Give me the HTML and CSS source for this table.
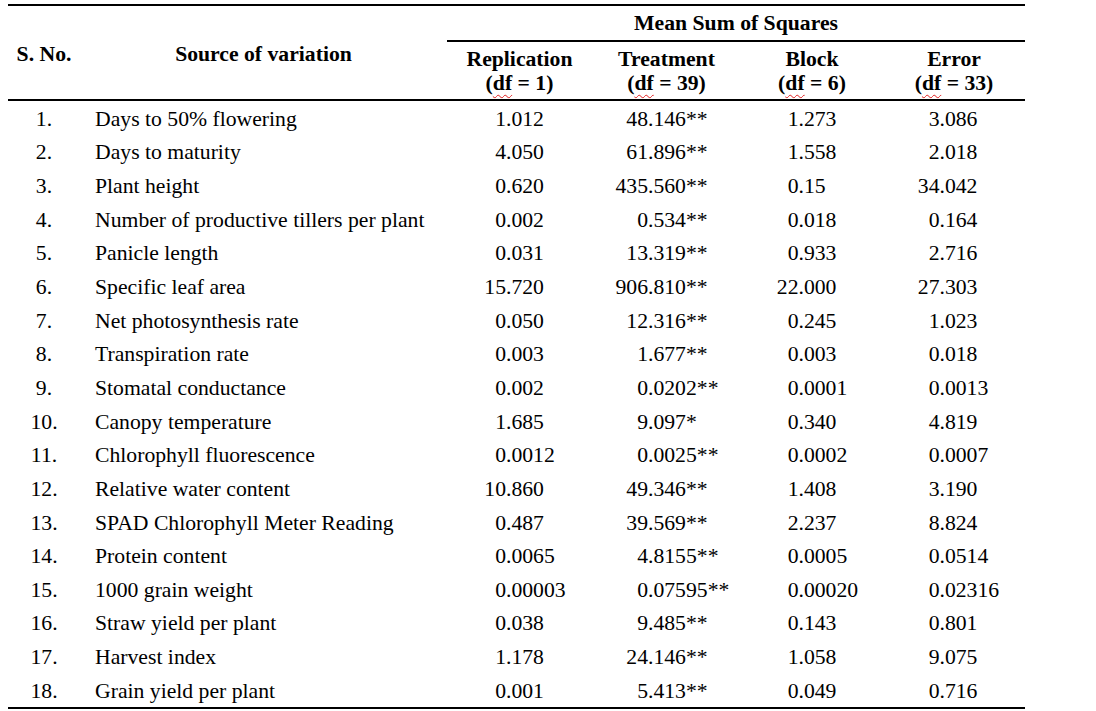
FILE: index.html
```html
<!DOCTYPE html>
<html>
<head>
<meta charset="utf-8">
<link rel="stylesheet" href="styles.css">
</head>
<body>
<table class="anova">
<colgroup>
<col class="c-sno"><col class="c-src"><col class="c-rep"><col class="c-trt"><col class="c-blk"><col class="c-err">
</colgroup>
<thead>
<tr class="h1">
<th rowspan="2" class="sno-h">S. No.</th>
<th rowspan="2" class="src-h">Source of variation</th>
<th colspan="4" class="mss">Mean Sum of Squares</th>
</tr>
<tr class="h2">
<th>Replication<br>(<span class="sq">df</span> = 1)</th>
<th>Treatment<br>(<span class="sq">df</span> = 39)</th>
<th>Block<br>(<span class="sq">df</span> = 6)</th>
<th>Error<br>(<span class="sq">df</span> = 33)</th>
</tr>
</thead>
<tbody>
<tr><td class="sno">1.</td><td class="src">Days to 50% flowering</td><td class="num rep"><span class="i">1</span>.012</td><td class="num trt"><span class="i">48</span>.146**</td><td class="num blk"><span class="i">1</span>.273</td><td class="num err"><span class="i">3</span>.086</td></tr>
<tr><td class="sno">2.</td><td class="src">Days to maturity</td><td class="num rep"><span class="i">4</span>.050</td><td class="num trt"><span class="i">61</span>.896**</td><td class="num blk"><span class="i">1</span>.558</td><td class="num err"><span class="i">2</span>.018</td></tr>
<tr><td class="sno">3.</td><td class="src">Plant height</td><td class="num rep"><span class="i">0</span>.620</td><td class="num trt"><span class="i">435</span>.560**</td><td class="num blk"><span class="i">0</span>.15</td><td class="num err"><span class="i">34</span>.042</td></tr>
<tr><td class="sno">4.</td><td class="src">Number of productive tillers per plant</td><td class="num rep"><span class="i">0</span>.002</td><td class="num trt"><span class="i">0</span>.534**</td><td class="num blk"><span class="i">0</span>.018</td><td class="num err"><span class="i">0</span>.164</td></tr>
<tr><td class="sno">5.</td><td class="src">Panicle length</td><td class="num rep"><span class="i">0</span>.031</td><td class="num trt"><span class="i">13</span>.319**</td><td class="num blk"><span class="i">0</span>.933</td><td class="num err"><span class="i">2</span>.716</td></tr>
<tr><td class="sno">6.</td><td class="src">Specific leaf area</td><td class="num rep"><span class="i">15</span>.720</td><td class="num trt"><span class="i">906</span>.810**</td><td class="num blk"><span class="i">22</span>.000</td><td class="num err"><span class="i">27</span>.303</td></tr>
<tr><td class="sno">7.</td><td class="src">Net photosynthesis rate</td><td class="num rep"><span class="i">0</span>.050</td><td class="num trt"><span class="i">12</span>.316**</td><td class="num blk"><span class="i">0</span>.245</td><td class="num err"><span class="i">1</span>.023</td></tr>
<tr><td class="sno">8.</td><td class="src">Transpiration rate</td><td class="num rep"><span class="i">0</span>.003</td><td class="num trt"><span class="i">1</span>.677**</td><td class="num blk"><span class="i">0</span>.003</td><td class="num err"><span class="i">0</span>.018</td></tr>
<tr><td class="sno">9.</td><td class="src">Stomatal conductance</td><td class="num rep"><span class="i">0</span>.002</td><td class="num trt"><span class="i">0</span>.0202**</td><td class="num blk"><span class="i">0</span>.0001</td><td class="num err"><span class="i">0</span>.0013</td></tr>
<tr><td class="sno">10.</td><td class="src">Canopy temperature</td><td class="num rep"><span class="i">1</span>.685</td><td class="num trt"><span class="i">9</span>.097*</td><td class="num blk"><span class="i">0</span>.340</td><td class="num err"><span class="i">4</span>.819</td></tr>
<tr><td class="sno">11.</td><td class="src">Chlorophyll fluorescence</td><td class="num rep"><span class="i">0</span>.0012</td><td class="num trt"><span class="i">0</span>.0025**</td><td class="num blk"><span class="i">0</span>.0002</td><td class="num err"><span class="i">0</span>.0007</td></tr>
<tr><td class="sno">12.</td><td class="src">Relative water content</td><td class="num rep"><span class="i">10</span>.860</td><td class="num trt"><span class="i">49</span>.346**</td><td class="num blk"><span class="i">1</span>.408</td><td class="num err"><span class="i">3</span>.190</td></tr>
<tr><td class="sno">13.</td><td class="src">SPAD Chlorophyll Meter Reading</td><td class="num rep"><span class="i">0</span>.487</td><td class="num trt"><span class="i">39</span>.569**</td><td class="num blk"><span class="i">2</span>.237</td><td class="num err"><span class="i">8</span>.824</td></tr>
<tr><td class="sno">14.</td><td class="src">Protein content</td><td class="num rep"><span class="i">0</span>.0065</td><td class="num trt"><span class="i">4</span>.8155**</td><td class="num blk"><span class="i">0</span>.0005</td><td class="num err"><span class="i">0</span>.0514</td></tr>
<tr><td class="sno">15.</td><td class="src">1000 grain weight</td><td class="num rep"><span class="i">0</span>.00003</td><td class="num trt"><span class="i">0</span>.07595**</td><td class="num blk"><span class="i">0</span>.00020</td><td class="num err"><span class="i">0</span>.02316</td></tr>
<tr><td class="sno">16.</td><td class="src">Straw yield per plant</td><td class="num rep"><span class="i">0</span>.038</td><td class="num trt"><span class="i">9</span>.485**</td><td class="num blk"><span class="i">0</span>.143</td><td class="num err"><span class="i">0</span>.801</td></tr>
<tr><td class="sno">17.</td><td class="src">Harvest index</td><td class="num rep"><span class="i">1</span>.178</td><td class="num trt"><span class="i">24</span>.146**</td><td class="num blk"><span class="i">1</span>.058</td><td class="num err"><span class="i">9</span>.075</td></tr>
<tr class="last"><td class="sno">18.</td><td class="src">Grain yield per plant</td><td class="num rep"><span class="i">0</span>.001</td><td class="num trt"><span class="i">5</span>.413**</td><td class="num blk"><span class="i">0</span>.049</td><td class="num err"><span class="i">0</span>.716</td></tr>
</tbody>
</table>
</body>
</html>
```

FILE: styles.css
```css
html, body {
  background: #ffffff;
}
body {
  margin: 4px 0 0 8px;
  font-family: "Liberation Serif", "Times New Roman", serif;
  font-size: 21.7px;
  color: #000;
}
.anova {
  border-collapse: collapse;
  table-layout: fixed;
  width: 1017px;
}
.c-sno { width: 72px; }
.c-src { width: 367px; }
.c-rep { width: 145px; }
.c-trt { width: 149px; }
.c-blk { width: 142px; }
.c-err { width: 142px; }

.anova th, .anova td {
  padding: 0;
  white-space: nowrap;
}
.anova th {
  font-weight: bold;
  text-align: center;
  vertical-align: middle;
}
.h1 th {
  border-top: 2px solid #000;
}
.h1 .mss {
  height: 34px;
  border-bottom: 2px solid #000;
}
.sno-h, .src-h {
  border-bottom: 2px solid #000;
  padding-top: 3px !important;
}
.h2 th {
  height: 57px;
  line-height: 24px;
  border-bottom: 2px solid #000;
}
.sq {
  text-decoration: underline wavy #e02020;
  text-decoration-thickness: 1px;
  text-underline-offset: 4px;
  text-decoration-skip-ink: none;
}
.anova td {
  height: 31.65px;
  padding-top: 2px;
  line-height: 24px;
  vertical-align: middle;
}
.sno {
  text-align: center;
}
.src {
  padding-left: 15px !important;
  text-align: left;
}
.num {
  text-align: left;
}
.num .i {
  display: inline-block;
  width: 33px;
  text-align: right;
}
.rep { padding-left: 26px !important; }
.trt { padding-left: 23px !important; }
.blk { padding-left: 24.5px !important; }
.err { padding-left: 23.5px !important; }
.last td {
  border-bottom: 2px solid #000;
}
```
